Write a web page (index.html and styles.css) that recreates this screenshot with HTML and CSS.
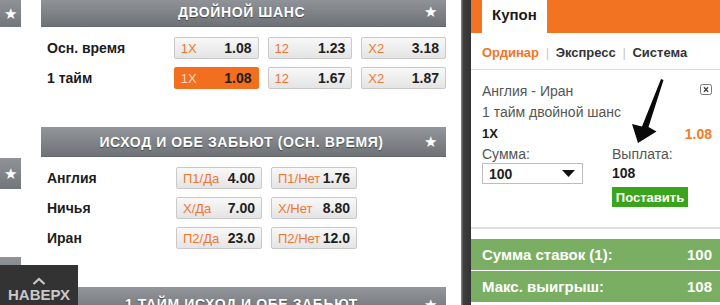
FILE: index.html
```html
<!DOCTYPE html>
<html>
<head>
    <title>Купон</title>
    <link rel="stylesheet" href="styles.css">
</head>
<body>
    <div class="page">
        <!-- Боковые пункты -->
        <aside class="rail">
            <div class="rail-item first">★</div>
            <div class="rail-item second">★</div>
            <div class="rail-item third"></div>
        </aside>

        <main class="markets">
            <section class="market">
                <div class="market-head"><span>Двойной шанс</span><i class="star">★</i></div>
                <div class="market-body">
                    <div class="row">
                        <div class="row-label">Осн. время</div>
                        <div class="odd"><span class="odd-name">1X</span><b>1.08</b></div>
                        <div class="odd"><span class="odd-name">12</span><b>1.23</b></div>
                        <div class="odd"><span class="odd-name">X2</span><b>3.18</b></div>
                    </div>
                    <div class="row">
                        <div class="row-label">1 тайм</div>
                        <div class="odd active"><span class="odd-name">1X</span><b>1.08</b></div>
                        <div class="odd"><span class="odd-name">12</span><b>1.67</b></div>
                        <div class="odd"><span class="odd-name">X2</span><b>1.87</b></div>
                    </div>
                </div>
            </section>

            <section class="market">
                <div class="market-head"><span>Исход и обе забьют (осн. время)</span><i class="star">★</i></div>
                <div class="market-body">
                    <div class="row">
                        <div class="row-label">Англия</div>
                        <div class="odd"><span class="odd-name">П1/Да</span><b>4.00</b></div>
                        <div class="odd"><span class="odd-name">П1/Нет</span><b>1.76</b></div>
                    </div>
                    <div class="row">
                        <div class="row-label">Ничья</div>
                        <div class="odd"><span class="odd-name">X/Да</span><b>7.00</b></div>
                        <div class="odd"><span class="odd-name">X/Нет</span><b>8.80</b></div>
                    </div>
                    <div class="row">
                        <div class="row-label">Иран</div>
                        <div class="odd"><span class="odd-name">П2/Да</span><b>23.0</b></div>
                        <div class="odd"><span class="odd-name">П2/Нет</span><b>12.0</b></div>
                    </div>
                </div>
            </section>

            <section class="market last">
                <div class="market-head"><span>1 тайм исход и обе забьют</span><i class="star">★</i></div>
            </section>
        </main>

        <div class="divider"></div>

        <section class="coupon">
            <div class="coupon-top">
                <div class="coupon-tab">Купон</div>
            </div>
            <div class="coupon-types">
                <span class="type current">Ординар</span>
                <span class="sep">|</span>
                <span class="type">Экспресс</span>
                <span class="sep">|</span>
                <span class="type">Система</span>
            </div>
            <div class="bet">
                <div class="bet-line">
                    <span>Англия - Иран</span>
                    <span class="close">
                        <svg width="12" height="11" viewBox="0 0 12 11"><rect x="0.5" y="0.5" width="11" height="10" rx="2" fill="#fff" stroke="#777"/><path d="M4 3.2l4 4.6M8 3.2l-4 4.6" stroke="#444" stroke-width="1.4"/></svg>
                    </span>
                </div>
                <div class="bet-line">1 тайм двойной шанс</div>
                <div class="bet-line pick"><b>1X</b><b class="rate">1.08</b></div>
                <div class="bet-form">
                    <div class="field">
                        <div class="field-label">Сумма:</div>
                        <div class="select">
                            <b>100</b>
                            <svg width="13" height="7" viewBox="0 0 13 7"><path d="M0 0h13L6.5 7z" fill="#111"/></svg>
                        </div>
                    </div>
                    <div class="field">
                        <div class="field-label">Выплата:</div>
                        <div class="payout">108</div>
                        <button class="place">Поставить</button>
                    </div>
                </div>
            </div>
            <div class="totals">
                <div class="total"><span>Сумма ставок (1):</span><span>100</span></div>
                <div class="total"><span>Макс. выигрыш:</span><span>108</span></div>
            </div>
        </section>
    </div>

    <!-- Кнопка наверх -->
    <a class="to-top" href="#">
        <svg width="14" height="8" viewBox="0 0 14 8"><path d="M1.5 7L7 2l5.5 5" fill="none" stroke="#c9c9c9" stroke-width="2.2"/></svg>
        <span>Наверх</span>
    </a>

    <!-- Стрелка-пометка -->
    <svg class="arrow" width="720" height="305" viewBox="0 0 720 305">
        <path d="M661 79 L663.5 80 L648.5 127 L656.5 131.5 L638 143 L632 124 L642 126.5 Z" fill="#0a0a0a"/>
    </svg>
</body>
</html>
```

FILE: styles.css
```css
body {
    margin: 0;
    background-color: #fff;
    font-family: 'Liberation Sans', Arial, sans-serif;
    color: #222;
    overflow: hidden;
}

.page {
    display: flex;
    width: 720px;
    height: 305px;
    overflow: hidden;
}

/* Левая колонка с серыми пунктами */
.rail {
    width: 41px;
    flex: none;
}

.rail-item {
    width: 21px;
    background: linear-gradient(#8f9398, #72767b);
    color: #fff;
    font-size: 15px;
    text-align: center;
}

.rail-item.first {
    height: 27px;
    line-height: 27px;
}

.rail-item.second {
    margin-top: 131px;
    height: 31px;
    line-height: 31px;
}

.rail-item.third {
    margin-top: 68px;
    height: 40px;
}

/* Рынки */
.markets {
    width: 405px;
    flex: none;
    margin-top: -3px;
}

.market {
    padding-bottom: 38px;
}

.market.last {
    padding-bottom: 0;
}

.market-head {
    display: flex;
    align-items: center;
    height: 30px;
    padding: 0 9px 0 0;
    background: linear-gradient(#93979c, #6e7277);
    border-bottom: 1px solid #63676b;
    box-sizing: border-box;
    color: #fff;
}

.market.last .market-head {
    align-items: flex-start;
    padding-top: 9px;
}

.market-head span {
    flex: 1;
    padding-left: 18px;
    text-align: center;
    font-size: 14px;
    font-weight: bold;
    text-transform: uppercase;
    letter-spacing: 0.6px;
    text-shadow: 0 1px 1px rgba(0, 0, 0, 0.45);
}

.star {
    font-style: normal;
    font-size: 15px;
    color: #fff;
}

.market-body {
    display: flex;
    flex-direction: column;
    gap: 8px;
    padding-top: 10px;
}

.row {
    display: flex;
    align-items: center;
    gap: 9px;
    height: 22px;
}

.row-label {
    width: 120px;
    padding-left: 6px;
    font-size: 14px;
    font-weight: bold;
    color: #1c1c1c;
}

.odd {
    display: flex;
    justify-content: space-between;
    align-items: center;
    width: 86px;
    height: 22px;
    padding: 0 6px 0 6px;
    box-sizing: border-box;
    background: linear-gradient(#f8f8f8, #e4e4e4);
    border: 1px solid #c9c9c9;
    border-radius: 2px;
    font-size: 14px;
}

.odd-name {
    color: #ef7830;
    font-size: 13px;
}

.odd b {
    color: #1e1e1e;
}

.odd.active {
    background: #f26f1f;
    border-color: #f26f1f;
}

.odd.active .odd-name {
    color: #ffd6bd;
}

.divider {
    width: 10px;
    flex: none;
    margin-left: 15px;
    background: linear-gradient(to right, #8a8a8a, #3d3d3d 25%, #333 100%);
}

/* Купон */
.coupon {
    flex: 1;
    min-width: 0;
    display: flex;
    flex-direction: column;
}

.coupon-top {
    height: 33px;
    padding-left: 11px;
    background-color: #f27322;
}

.coupon-tab {
    width: 65px;
    height: 33px;
    padding-left: 10px;
    box-sizing: border-box;
    background-color: #fff;
    font-size: 15px;
    font-weight: bold;
    line-height: 29px;
    color: #1b1b1b;
}

.coupon-types {
    padding: 10px 0 6px 11px;
    line-height: 20px;
    white-space: nowrap;
    border-bottom: 1px solid #dcdcdc;
    font-size: 13px;
    font-weight: bold;
    color: #333;
}

.type.current {
    color: #f07628;
}

.sep {
    margin: 0 3px;
    font-weight: normal;
    color: #c8c8c8;
}

.bet {
    height: 159px;
    padding: 10px 8px 0 11px;
    box-sizing: border-box;
    border-bottom: 2px solid #dedede;
}

.bet-line {
    display: flex;
    justify-content: space-between;
    align-items: center;
    height: 21px;
    font-size: 14px;
    color: #555;
}

.close {
    display: flex;
    margin-top: -2px;
}

.pick {
    height: 23px;
    font-size: 13px;
    color: #1b1b1b;
}

.rate {
    font-size: 14px;
    color: #f47a2a;
}

.bet-form {
    display: flex;
    gap: 29px;
}

.field-label {
    height: 18px;
    line-height: 18px;
    font-size: 14px;
    color: #555;
}

.select {
    display: flex;
    justify-content: space-between;
    align-items: center;
    width: 101px;
    height: 21px;
    padding: 0 7px 0 6px;
    box-sizing: border-box;
    border: 1px solid #bdbdbd;
    font-size: 14px;
}

.payout {
    height: 21px;
    line-height: 21px;
    font-size: 14px;
    font-weight: bold;
    color: #1b1b1b;
}

.place {
    display: block;
    margin-top: 3px;
    width: 76px;
    height: 20px;
    padding: 0;
    border: none;
    background-color: #3aa51c;
    color: #fff;
    font-family: 'Liberation Sans', Arial, sans-serif;
    font-size: 13px;
    font-weight: bold;
}

.totals {
    display: flex;
    flex-direction: column;
    gap: 1px;
    margin-top: 10px;
}

.total {
    display: flex;
    justify-content: space-between;
    align-items: center;
    height: 31px;
    padding: 0 8px 0 11px;
    background-color: #7aae62;
    color: #fff;
    font-size: 15px;
    font-weight: bold;
}

/* Кнопка наверх поверх рынков */
.to-top {
    position: fixed;
    left: 0;
    bottom: 0;
    display: flex;
    flex-direction: column;
    align-items: center;
    width: 78px;
    height: 40px;
    padding-top: 12px;
    box-sizing: border-box;
    background-color: #333;
    text-decoration: none;
    color: #c9c9c9;
    font-size: 15px;
    font-weight: bold;
    text-transform: uppercase;
}

.to-top span {
    margin-top: 1px;
}

.arrow {
    position: absolute;
    left: 0;
    top: 0;
    pointer-events: none;
}
```
